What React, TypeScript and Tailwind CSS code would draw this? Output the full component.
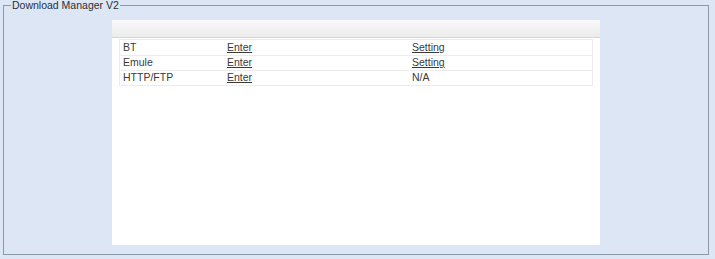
import React from "react";

const rows = [
  { name: "BT", enter: "Enter", setting: "Setting" },
  { name: "Emule", enter: "Enter", setting: "Setting" },
  { name: "HTTP/FTP", enter: "Enter", setting: null },
];

export default function App() {
  return (
    <div
      className="w-[715px] h-[259px] bg-[#dde6f5] pt-0"
      style={{ fontFamily: '"Liberation Sans", Arial, sans-serif' }}
    >
      <fieldset className="ml-[3px] w-[706px] h-[255px] border border-[#8a9aa8] p-0 m-0 min-w-0">
        <legend className="ml-[7px] px-[1px] text-[10.5px] leading-[10px] text-[#27303a]">
          Download Manager V2
        </legend>
        <div className="mx-auto mt-[10px] w-[488px] h-[225px] bg-white">
          <div className="h-[18px] bg-gradient-to-b from-[#f9f9f9] to-[#ececec] border-b border-[#d6d6d6]" />
          <div className="mx-[7px] mt-[1px] border border-[#ececec]">
            {rows.map((r, i) => (
              <div
                key={r.name}
                className={`flex h-[15px] items-center text-[10.5px] text-[#3a3a3a] ${i > 0 ? "border-t border-[#ececec]" : ""}`}
              >
                <div className="w-[103px] pl-[3px]">{r.name}</div>
                <div className="w-[185px] pl-[4px]">
                  <span className="underline">{r.enter}</span>
                </div>
                <div className="flex-1 pl-[4px]">
                  {r.setting ? <span className="underline">{r.setting}</span> : "N/A"}
                </div>
              </div>
            ))}
          </div>
        </div>
      </fieldset>
    </div>
  );
}
